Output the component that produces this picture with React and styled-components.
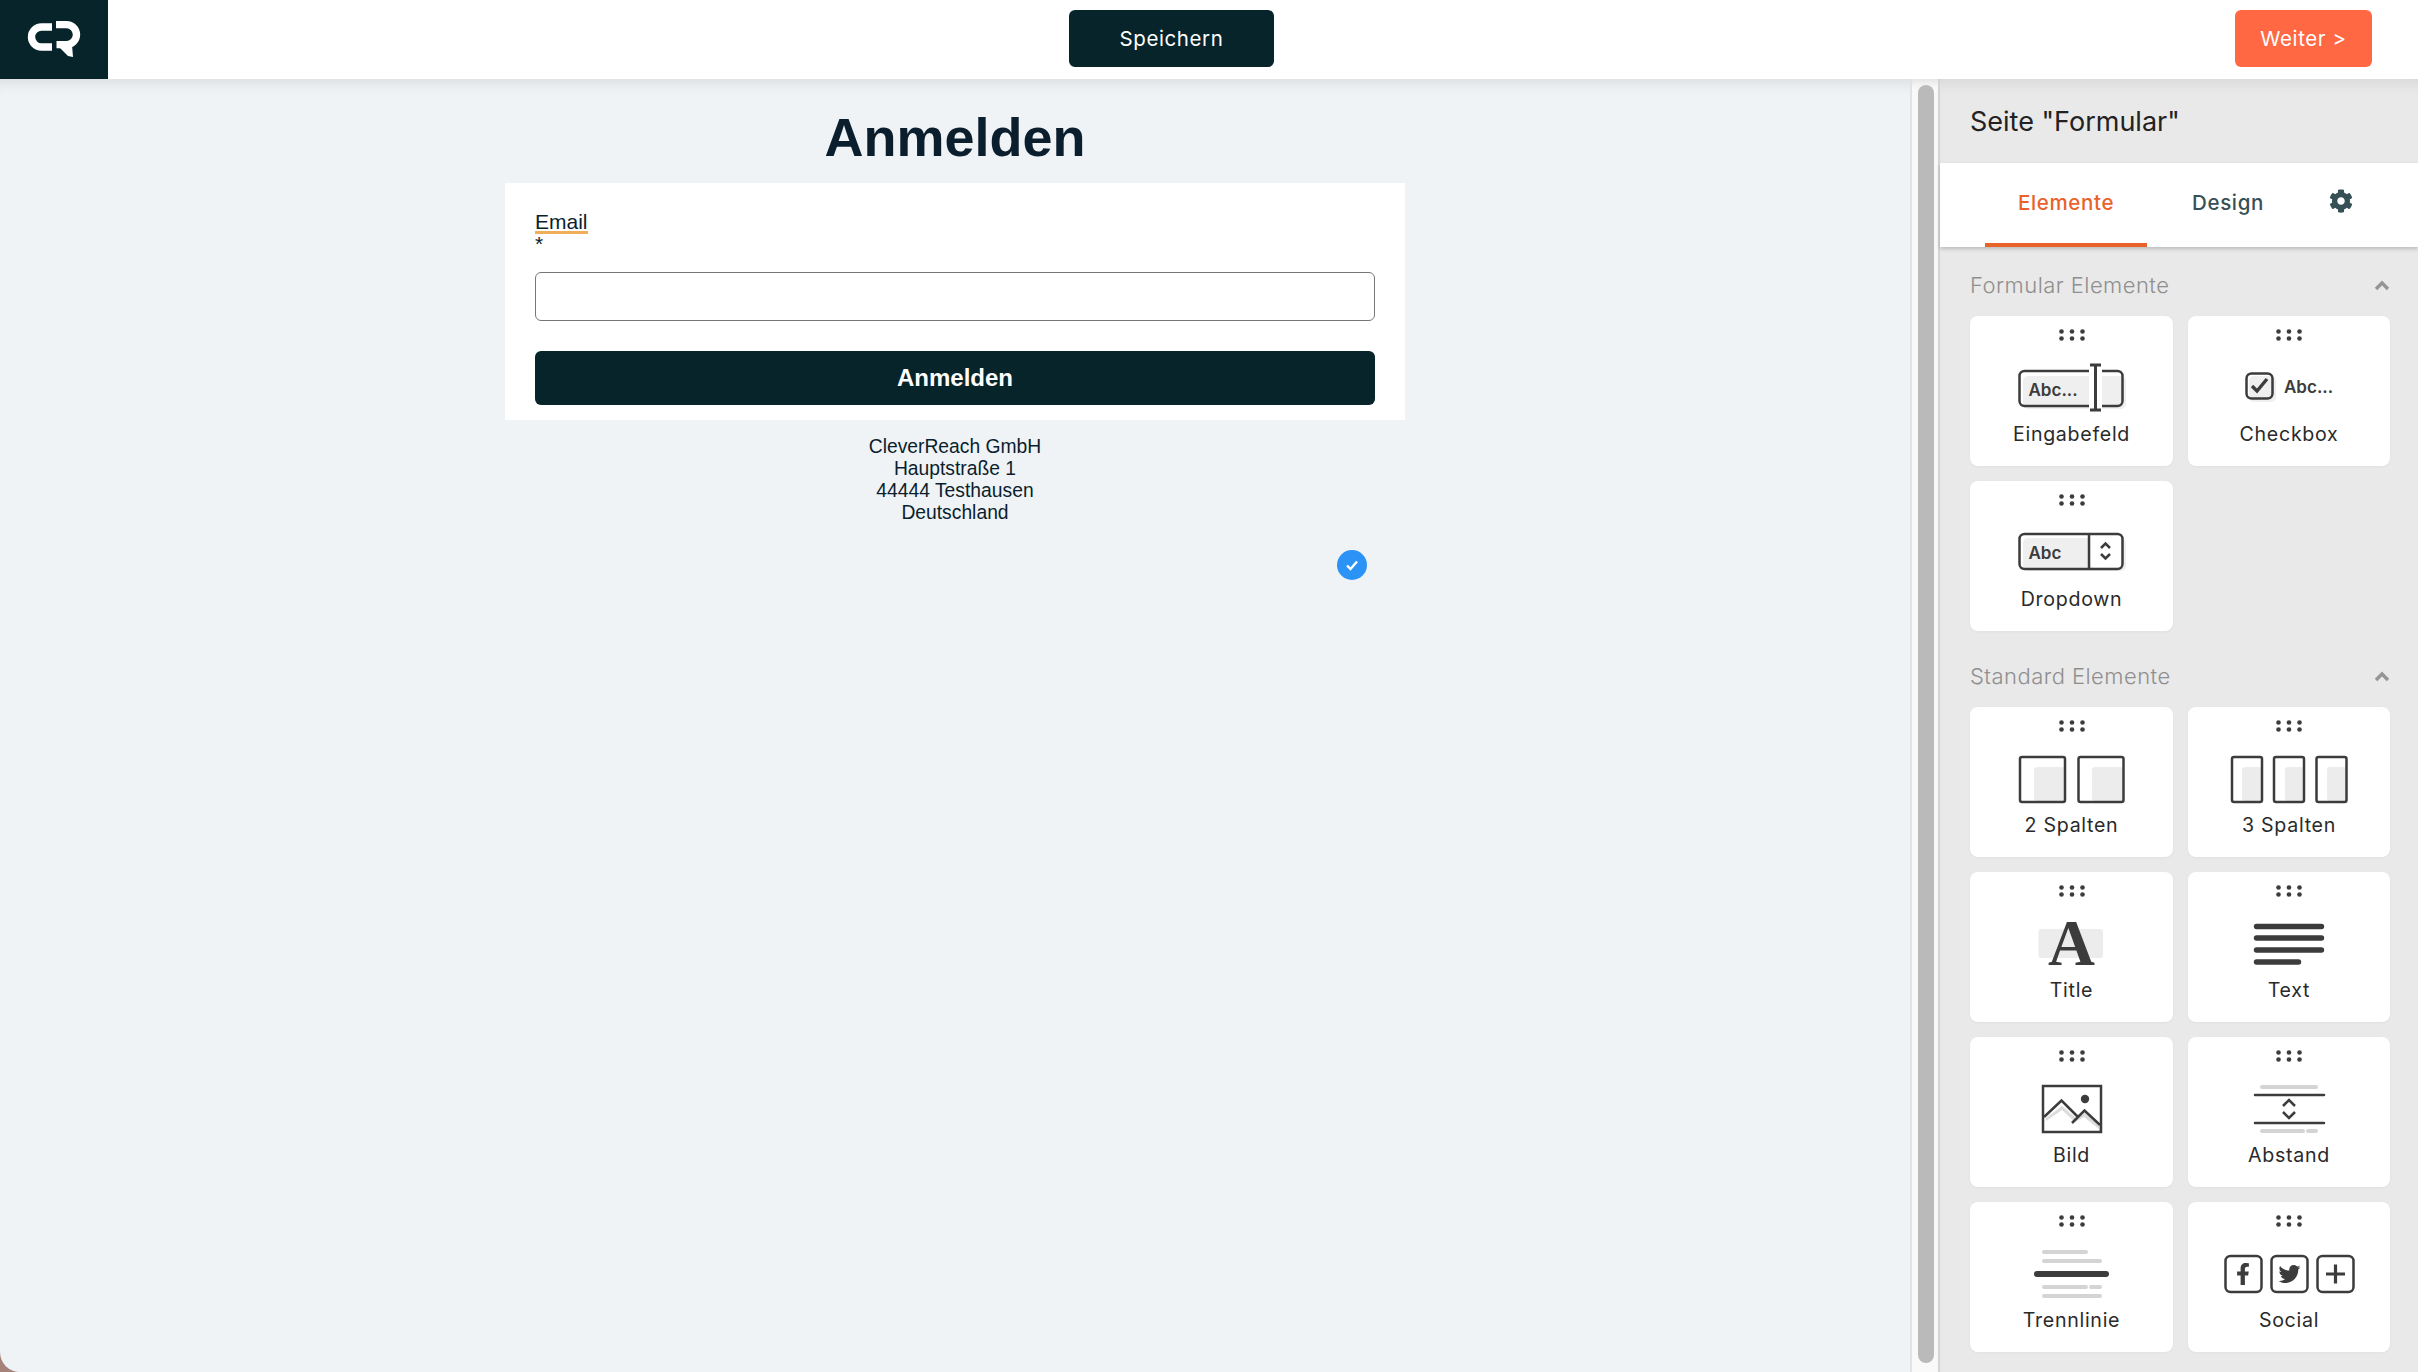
import React from "react";
import styled, { createGlobalStyle } from "styled-components";
import { FaCog, FaFacebookF, FaTwitter } from "react-icons/fa";

const UI = `Inter, "Noto Sans", sans-serif`;
const FORM = `"Liberation Sans", Arial, sans-serif`;
const INK = "#3c3c3c";

const Global = createGlobalStyle`
  html, body { margin: 0; padding: 0; height: 100%; background: #a5827a; }
  * { box-sizing: border-box; }
`;

const App_ = styled.div`
  width: 2418px; height: 1372px; display: flex; flex-direction: column;
  overflow: hidden; border-bottom-left-radius: 20px; background: #eff3f6; font-family: ${UI};
`;
const Header = styled.header`
  height: 79px; flex: none; background: #fff; display: flex; align-items: flex-start;
  position: relative; z-index: 2; padding-right: 46px;
`;
const LogoBox = styled.div`width: 108px; height: 79px; background: #06242a; flex: none;`;
const SaveSlot = styled.div`width: 1166px; flex: none; display: flex; justify-content: flex-end;`;
const BarButton = styled.button`
  height: 57px; border: 0; border-radius: 6px; color: #fff; font: 400 20.5px ${UI};
  letter-spacing: .6px; background: ${p => p.$bg}; width: ${p => p.$w}px; margin-top: 10px;
`;
const Push = styled.div`flex: 1;`;
const Main = styled.main`flex: 1; display: flex; min-height: 0;`;
const Canvas = styled.section`
  width: 1910px; flex: none; display: flex; flex-direction: column; align-items: center;
  padding-top: 28px; box-shadow: inset 0 14px 14px -10px rgba(0,0,0,.09);
  font-family: ${FORM}; color: #0b1e2d;
`;
const Heading = styled.h1`font: 700 54px/60px ${FORM}; margin: 0 0 16px; color: #0b1e2d;`;
const FormCard = styled.form`
  width: 900px; background: #fff; padding: 27px 30px 15px; display: flex; flex-direction: column;
`;
const LabelWrap = styled.div`font-size: 21px; line-height: 22px; height: 62px; padding-top: 1px;`;
const Spelled = styled.span`display: inline-block; height: 23px; border-bottom: 3px solid #f0ad5a;`;
const Star = styled.div`line-height: 20px;`;
const Field = styled.input`
  display: block; height: 49px; width: 100%; border: 1.5px solid #777; border-radius: 6px; background: #fff;
`;
const Submit = styled.button`
  margin-top: 30px; height: 54px; border: 0; border-radius: 6px; background: #06242a; color: #fff;
  font: 700 24px ${FORM};
`;
const Address = styled.address`
  margin-top: 16px; font: normal 19.3px/22px ${FORM}; text-align: center; color: #0b1e2d;
`;
const BadgeRow = styled.div`width: 900px; margin-top: 26px; padding-right: 38px; display: flex; justify-content: flex-end;`;
const Gutter = styled.div`
  width: 30px; flex: none; background: #f9f9f9; display: flex;
  border-left: 2px solid #e2e2e2; border-right: 2px solid #d4d4d4; padding: 6px 4px 9px 6px;
  box-shadow: inset 0 12px 10px -10px rgba(0,0,0,.12);
`;
const Thumb = styled.div`flex: 1; background: #bababa; border-radius: 8px;`;
const Panel = styled.aside`
  flex: 1; background: #e9e9e9; display: flex; flex-direction: column;
  box-shadow: inset 0 14px 14px -10px rgba(0,0,0,.08);
`;
const PanelTitle = styled.div`
  height: 84px; flex: none; padding-left: 30px; display: flex; align-items: center;
  font: 400 27px ${UI}; color: #222;
`;
const Tabs = styled.nav`
  height: 84px; flex: none; background: #fff; padding-left: 45px; display: flex;
  box-shadow: 0 2px 4px rgba(0,0,0,.2); position: relative;
`;
const Tab = styled.div`
  width: 162px; display: flex; align-items: center; justify-content: center; padding-bottom: 2px;
  font: 500 20.5px ${UI}; letter-spacing: .65px; color: ${p => (p.$active ? "#e8622a" : "#375055")};
  border-bottom: 4px solid ${p => (p.$active ? "#e8622a" : "transparent")};
`;
const GearTab = styled.div`width: 66px; display: flex; justify-content: center; padding-top: 26px; color: #375055; margin-left: -1px;`;
const Body = styled.div`padding: 0 28px 0 30px;`;
const SectionHead = styled.div`
  height: 32px; margin: ${p => p.$top}px 0 15px; display: flex; align-items: center; justify-content: space-between;
  font: 300 22px ${UI}; letter-spacing: .45px; color: #8f8f8f;
`;
const Grid = styled.div`display: grid; grid-template-columns: 203px 202px; grid-auto-rows: 150px; gap: 15px;`;
const Tile = styled.div`
  background: #fff; border-radius: 8px; display: flex; flex-direction: column; align-items: center;
  box-shadow: 0 1px 3px rgba(0,0,0,.04); padding-top: 13px;
`;
const Art = styled.svg`display: block; flex: none; margin-top: ${p => p.$mt || 0}px;`;
const TileLabel = styled.div`
  font: 400 19.6px/26px ${UI}; color: #2a2a2a; margin-top: -1px; letter-spacing: .7px;
`;

const Logo = () => (
  <Art width="108" height="79" viewBox="0 0 108 79">
    <path d="M52 27H41.5a10 10 0 0 0 0 20H52" fill="none" stroke="#fff" strokeWidth="7.4" />
    <path d="M56 24.6H66.5a10 10 0 0 1 0 20H56.5" fill="none" stroke="#fff" strokeWidth="7.4" />
    <path d="M58 46l14-1 1 12-5-1z" fill="#fff" />
  </Art>
);
const Chevron = () => (
  <Art width="16" height="12" viewBox="0 0 16 12">
    <path d="M2 10l6-6 6 6" fill="none" stroke="#959595" strokeWidth="3.4" />
  </Art>
);
const Badge = () => (
  <Art width="30" height="30" viewBox="0 0 30 30">
    <circle cx="15" cy="15" r="15" fill="#2a93f5" />
    <path d="M10 15.5l3.5 3.5 6.5-7.5" fill="none" stroke="#fff" strokeWidth="2.4" />
  </Art>
);
const Dots = () => (
  <Art width="26" height="12" viewBox="0 0 26 12">
    {[2.5, 13, 23.5].map(x => [2.5, 9.5].map(y => <circle key={x + "-" + y} cx={x} cy={y} r="2.3" fill={INK} />))}
  </Art>
);

const line = { fill: "none", stroke: INK, strokeWidth: 2.5 };
const soft = { fill: "none", stroke: "#d4d4d4", strokeWidth: 4, strokeLinecap: "round" };
const abc = { fontFamily: UI, fontWeight: 600, fontSize: 17, fill: INK };

const icons = {
  input: (
    <>
      <rect x="21" y="24" width="103" height="33" rx="5" fill="#efefef" />
      <rect x="17.5" y="19" width="103" height="35" rx="5" {...line} />
      <text x="26.5" y="44" {...abc}>Abc...</text>
      <rect x="87" y="14" width="13" height="45" fill="#fff" />
      <path d="M93.5 13v45M88 13h11M88 58h11" {...line} strokeWidth="3" />
    </>
  ),
  checkbox: (
    <>
      <rect x="30" y="24" width="27" height="26" rx="5" fill="#efefef" />
      <rect x="27.5" y="21.5" width="26" height="25" rx="5" {...line} />
      <path d="M33 34l5 5 10-12" {...line} strokeWidth="3.4" />
      <text x="65" y="41" {...abc}>Abc...</text>
    </>
  ),
  dropdown: (
    <>
      <rect x="21" y="21" width="103" height="33" rx="5" fill="#efefef" />
      <rect x="88.5" y="18.5" width="31" height="32" rx="4" fill="#fff" />
      <rect x="17.5" y="17" width="103" height="35" rx="5" {...line} />
      <path d="M87 17v35" {...line} />
      <text x="26.5" y="42" {...abc}>Abc</text>
      <path d="M99 31l4.5-4.5 4.5 4.5M99 37l4.5 4.5 4.5-4.5" {...line} />
    </>
  ),
  col2: (
    <>
      <rect x="32" y="24" width="31" height="34" rx="3" fill="#ececec" />
      <rect x="90" y="24" width="31" height="34" rx="3" fill="#ececec" />
      <rect x="18" y="14" width="45" height="45" rx="2" {...line} />
      <rect x="76.5" y="14" width="45" height="45" rx="2" {...line} />
    </>
  ),
  col3: (
    <>
      {[[13, 23], [55, 66], [97.5, 108]].map(([x, g]) => (
        <React.Fragment key={x}>
          <rect x={g} y="24" width={x + 30 - g} height="34" rx="3" fill="#ececec" />
          <rect x={x} y="14" width="30" height="45" rx="2" {...line} />
        </React.Fragment>
      ))}
    </>
  ),
  title: (
    <>
      <rect x="36.5" y="21" width="64.5" height="29" rx="3" fill="#ececec" />
      <text x="69.5" y="57" textAnchor="middle" fontFamily="'Liberation Serif', serif" fontWeight="700" fontSize="65" fill={INK}>A</text>
    </>
  ),
  text: (
    <path d="M37.5 18.5h65M37.5 30h65M37.5 42h65M37.5 54h42" fill="none" stroke={INK} strokeWidth="5.4" strokeLinecap="round" />
  ),
  image: (
    <>
      <path d="M44 45l16-12 15 13 8-6 15 13v6H44z" fill="#dcdcdc" />
      <path d="M44 48l16-11 13 12 9-5 15 12v3H44z" fill="#fff" />
      <rect x="41" y="13" width="58" height="46" {...line} />
      <circle cx="83" cy="26" r="4.2" fill={INK} />
      <path d="M42 44l17.5-16.5L76 44M70 50l12.5-12.5L98 52" {...line} />
    </>
  ),
  spacer: (
    <>
      <path d="M43 14h54M43 58h41M89 58h8" {...soft} />
      <path d="M36 22h69M36 50h69" {...line} strokeLinecap="round" />
      <path d="M64 33l6-6 6 6M64 39l6 6 6-6" {...line} />
    </>
  ),
  divider: (
    <>
      <path d="M42 14h42M42 23h56M42 49h42M89 49h9M42 58h56" {...soft} />
      <path d="M35 36h69" fill="none" stroke={INK} strokeWidth="6" strokeLinecap="round" />
    </>
  ),
  social: (
    <>
      <rect x="6.5" y="18" width="36" height="36" rx="5" {...line} />
      <rect x="52.5" y="18" width="36" height="36" rx="5" {...line} />
      <rect x="98.5" y="18" width="36" height="36" rx="5" {...line} />
      <FaFacebookF x="13" y="25" size="22" color={INK} />
      <FaTwitter x="59.5" y="25" size="22" color={INK} />
      <path d="M107 36h19M116.5 26.5v19" fill="none" stroke={INK} strokeWidth="3.2" />
    </>
  ),
};

const Item = ({ icon, label }) => (
  <Tile>
    <Dots />
    <Art width="140" height="70" viewBox="0 0 140 70" $mt="11">{icons[icon]}</Art>
    <TileLabel>{label}</TileLabel>
  </Tile>
);

export default function App() {
  return (
    <App_>
      <Global />
      <Header>
        <LogoBox><Logo /></LogoBox>
        <SaveSlot><BarButton $bg="#06242a" $w={205}>Speichern</BarButton></SaveSlot>
        <Push />
        <BarButton $bg="#ff6842" $w={137}>Weiter &gt;</BarButton>
      </Header>
      <Main>
        <Canvas>
          <Heading>Anmelden</Heading>
          <FormCard>
            <LabelWrap>
              <Spelled>Email</Spelled>
              <Star>*</Star>
            </LabelWrap>
            <Field />
            <Submit type="button">Anmelden</Submit>
          </FormCard>
          <Address>
            CleverReach GmbH<br />Hauptstraße 1<br />44444 Testhausen<br />Deutschland
          </Address>
          <BadgeRow><Badge /></BadgeRow>
        </Canvas>
        <Gutter><Thumb /></Gutter>
        <Panel>
          <PanelTitle>Seite "Formular"</PanelTitle>
          <Tabs>
            <Tab $active>Elemente</Tab>
            <Tab>Design</Tab>
            <GearTab><FaCog size={24} /></GearTab>
          </Tabs>
          <Body>
            <SectionHead $top={22}>Formular Elemente<Chevron /></SectionHead>
            <Grid>
              <Item icon="input" label="Eingabefeld" />
              <Item icon="checkbox" label="Checkbox" />
              <Item icon="dropdown" label="Dropdown" />
            </Grid>
            <SectionHead $top={29}>Standard Elemente<Chevron /></SectionHead>
            <Grid>
              <Item icon="col2" label="2 Spalten" />
              <Item icon="col3" label="3 Spalten" />
              <Item icon="title" label="Title" />
              <Item icon="text" label="Text" />
              <Item icon="image" label="Bild" />
              <Item icon="spacer" label="Abstand" />
              <Item icon="divider" label="Trennlinie" />
              <Item icon="social" label="Social" />
            </Grid>
          </Body>
        </Panel>
      </Main>
    </App_>
  );
}
